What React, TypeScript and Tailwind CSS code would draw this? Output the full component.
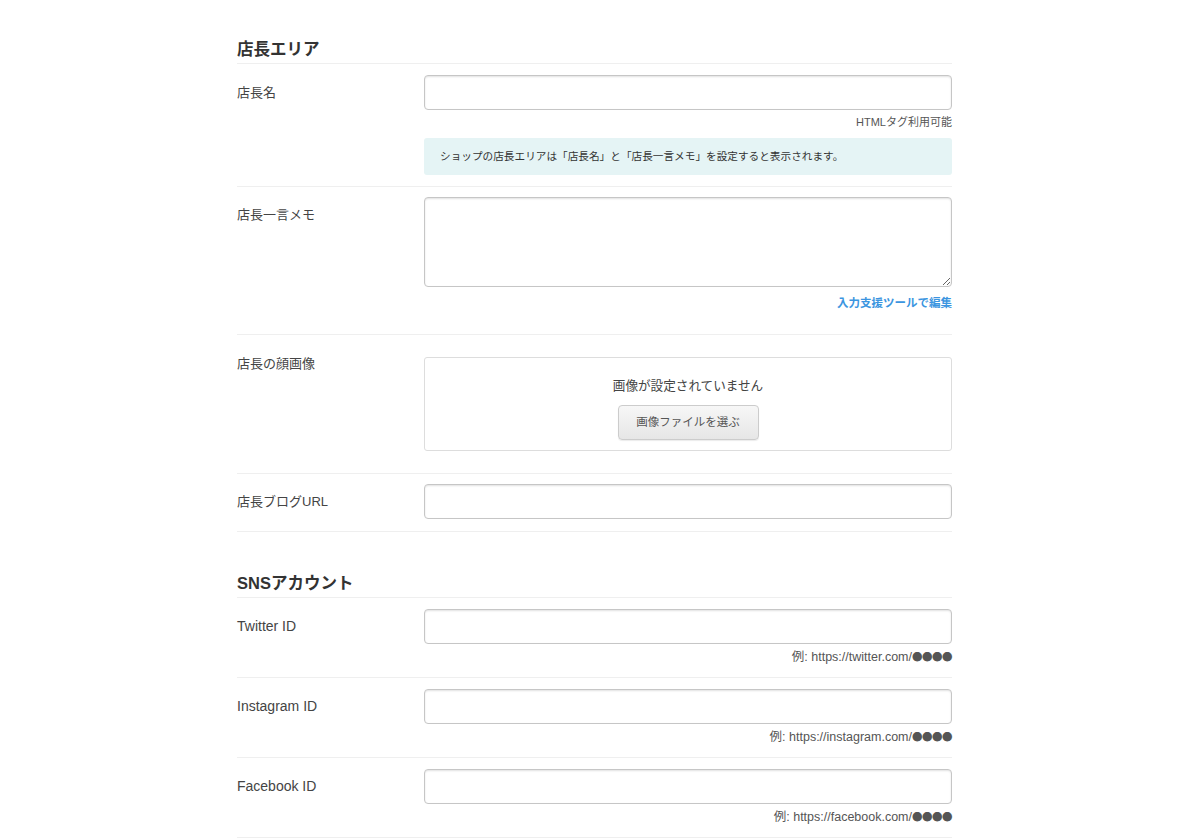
import React from "react";

const font = { fontFamily: '"Liberation Sans", "Noto Sans CJK JP", sans-serif' };

function TextInput() {
    return (
        <input
            type="text"
            className="block w-full h-[35px] rounded-[4px] border border-[#c6c6c6] bg-white px-2 text-[13px] text-[#333] shadow-[inset_0_1px_2px_rgba(0,0,0,0.12)] outline-none"
        />
    );
}

function Hint({ children, link }: { children: React.ReactNode; link?: boolean }) {
    return (
        <p
            className={
                link
                    ? "mt-[8px] text-right text-[11.5px] leading-[16px] font-bold text-[#3b95e0]"
                    : "mt-[4px] text-right text-[11px] leading-[16px] text-[#555]"
            }
        >
            {children}
        </p>
    );
}

// SNSの例示URL
function UrlHint({ url }: { url: string }) {
    return (
        <p className="mt-[5px] text-right text-[12.5px] leading-[16px] text-[#555]">
            例: {url}
            <span className="text-[10.5px] tracking-[-0.5px]" style={{ fontFamily: '"Noto Sans CJK JP", sans-serif' }}>
                ●●●●
            </span>
        </p>
    );
}

function Row({
    label,
    children,
    className,
    latin,
}: {
    label: string;
    children: React.ReactNode;
    className?: string;
    latin?: boolean;
}) {
    return (
        <div className={"flex border-b border-[#efefef] " + (className ?? "pt-[11px] pb-[12px]")}>
            <div
                className={
                    "w-[187px] shrink-0 leading-[35px] text-[#444] " + (latin ? "text-[14px]" : "text-[13px]")
                }
            >
                {label}
            </div>
            <div className="flex-1">{children}</div>
        </div>
    );
}

function Heading({ children, className }: { children: React.ReactNode; className?: string }) {
    return (
        <h2
            className={
                "border-b border-[#efefef] pt-[2px] pb-[2px] text-[16.5px] leading-[24px] font-bold text-[#333] " +
                (className ?? "")
            }
        >
            {children}
        </h2>
    );
}

export default function App() {
    return (
        <div style={font} className="min-h-[840px] bg-white">
            <div className="ml-[237px] w-[715px] pt-[35px]">
                <Heading>店長エリア</Heading>

                <Row label="店長名" className="pt-[11px] pb-[11px]">
                    <TextInput />
                    <Hint>HTMLタグ利用可能</Hint>
                    <div className="mt-[8px] flex h-[37px] items-center rounded-[3px] bg-[#e5f4f5] px-[16px] text-[10.65px] text-[#333]">
                        ショップの店長エリアは「店長名」と「店長一言メモ」を設定すると表示されます。
                    </div>
                </Row>

                <Row label="店長一言メモ" className="pt-[10px] pb-[23px]">
                    <textarea className="block w-full h-[90px] rounded-[4px] border border-[#c6c6c6] bg-white px-2 py-1 text-[13px] text-[#333] shadow-[inset_0_1px_2px_rgba(0,0,0,0.12)] outline-none" />
                    <Hint link>入力支援ツールで編集</Hint>
                </Row>

                <Row label="店長の顔画像" className="pt-[11px] pb-[11px]">
                    <div className="my-[11px] flex h-[94px] flex-col items-center rounded-[3px] border border-[#dddddd] pt-[19px]">
                        <p className="text-[12.6px] leading-[18px] text-[#444]">画像が設定されていません</p>
                        <button className="mt-[10px] h-[35px] w-[141px] rounded-[4px] border border-[#cccccc] bg-gradient-to-b from-[#f7f7f7] to-[#e6e6e6] text-[11.5px] text-[#555] shadow-[0_1px_1px_rgba(0,0,0,0.08)]">
                            画像ファイルを選ぶ
                        </button>
                    </div>
                </Row>

                <Row label="店長ブログURL" className="pt-[10px] pb-[12px]">
                    <TextInput />
                </Row>

                <Heading className="mt-[37px]">SNSアカウント</Heading>

                <Row label="Twitter ID" latin>
                    <TextInput />
                    <UrlHint url="https://twitter.com/" />
                </Row>

                <Row label="Instagram ID" latin>
                    <TextInput />
                    <UrlHint url="https://instagram.com/" />
                </Row>

                <Row label="Facebook ID" latin>
                    <TextInput />
                    <UrlHint url="https://facebook.com/" />
                </Row>
            </div>
        </div>
    );
}
